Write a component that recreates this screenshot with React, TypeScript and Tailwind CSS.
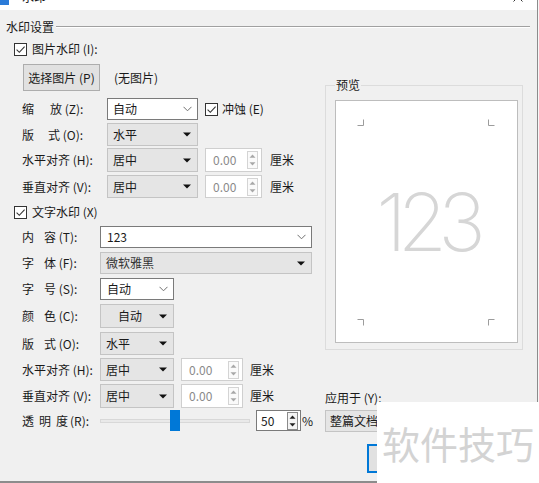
import React from 'react';

function Check() {
  return (
    <span className="flex h-[13px] w-[13px] shrink-0 items-center justify-center border border-[#333333] bg-white">
      <svg width="11" height="11" viewBox="0 0 11 11">
        <path d="M1.6 5.6 L4.3 8.3 L9.6 2.6" fill="none" stroke="#333333" strokeWidth="1.1" />
      </svg>
    </span>
  );
}

function Chevron() {
  return (
    <svg width="9" height="6" viewBox="0 0 9 6" className="shrink-0">
      <path d="M0.5 0.8 L4.5 4.8 L8.5 0.8" fill="none" stroke="#707070" strokeWidth="1" />
    </svg>
  );
}

function Tri() {
  return (
    <svg width="8" height="5" viewBox="0 0 8 5" className="shrink-0">
      <path d="M0 0.5 H8 L4 4.5 Z" fill="#111111" />
    </svg>
  );
}

function SpinArrows({ dark }: { dark?: boolean }) {
  const c = dark ? '#222222' : '#a8a8a8';
  return (
    <span
      className={
        dark
          ? 'flex h-[18px] w-[11px] shrink-0 flex-col items-center justify-around border border-[#8a8a8a] bg-[#f4f4f4]'
          : 'flex h-[18px] w-[11px] shrink-0 flex-col items-center justify-around border border-[#d4d4d4] bg-[#fafafa]'
      }
    >
      <svg width="7" height="4" viewBox="0 0 7 4">
        <path d="M0.5 3.8 L3.5 0.5 L6.5 3.8 Z" fill={c} />
      </svg>
      <svg width="7" height="4" viewBox="0 0 7 4">
        <path d="M0.5 0.2 L3.5 3.5 L6.5 0.2 Z" fill={c} />
      </svg>
    </span>
  );
}

function Spin({ w }: { w: string }) {
  return (
    <div className={`flex h-full items-center justify-between border border-[#cfcfcf] bg-white pl-[7px] pr-[3px] text-[#8a8a8a] ${w}`}>
      <span>0.00</span>
      <SpinArrows />
    </div>
  );
}

export default function App() {
  return (
    <div className="h-[483px] w-[539px] overflow-hidden bg-[#f7f7f7] font-['Noto_Sans_CJK_SC',sans-serif] text-[12px] leading-none text-[#1a1a1a]">
      <div className="relative h-[483px] w-[538px] border-r border-b-2 border-[#8c8c8c] bg-[#f0f0f0]">
        {/* title bar, mostly cut off */}
        <div className="h-[10px] overflow-hidden bg-white">
          <div className="-mt-[20px] flex h-[34px] items-center">
            <span className="-ml-[7px] h-[16px] w-[16px] bg-[#2b7bd8]" />
            <span className="ml-[13px] text-[12px]">水印</span>
            <svg width="10" height="10" viewBox="0 0 10 10" className="ml-auto mr-[14px]">
              <path d="M0.5 0.5 L9.5 9.5 M9.5 0.5 L0.5 9.5" stroke="#333" strokeWidth="1" />
            </svg>
          </div>
        </div>

        <div className="pt-[10px]">
          {/* group header */}
          <div className="flex h-[14px] items-center pl-[6px] pr-[7px]">
            <span>水印设置</span>
            <span className="ml-[2px] h-[2px] flex-1 border-t border-b border-t-[#a0a0a0] border-b-[#ffffff]" />
          </div>

          <div className="flex">
            {/* left column */}
            <div className="flex w-[318px] flex-col pl-[14px]">
              <div className="mt-[8px] flex h-[14px] items-center">
                <Check />
                <span className="ml-[5px]">图片水印 (I):</span>
              </div>

              <div className="mt-[8px] flex h-[27px] items-center pl-[9px]">
                <div className="flex h-full w-[77px] items-center justify-center border border-[#adadad] bg-[#e1e1e1]">
                  选择图片 (P)
                </div>
                <span className="ml-[14px]">(无图片)</span>
              </div>

              <div className="mt-[7px] flex h-[22px] items-center pl-[8px]">
                <span className="flex w-[85px]">
                  <span className="w-[28px]">缩</span>
                  <span>放 (Z):</span>
                </span>
                <div className="flex h-full w-[91px] items-center justify-between border border-[#7a7a7a] bg-white pl-[5px] pr-[5px]">
                  <span>自动</span>
                  <Chevron />
                </div>
                <span className="ml-[7px]">
                  <Check />
                </span>
                <span className="ml-[4px]">冲蚀 (E)</span>
              </div>

              <div className="mt-[3px] flex h-[23px] items-center pl-[8px]">
                <span className="flex w-[85px]">
                  <span className="w-[26px]">版</span>
                  <span>式 (O):</span>
                </span>
                <div className="flex h-full w-[91px] items-center justify-between border border-[#c4c4c4] bg-[#e5e5e5] pl-[5px] pr-[6px]">
                  <span>水平</span>
                  <Tri />
                </div>
              </div>

              <div className="mt-[2px] flex h-[24px] items-center pl-[8px]">
                <span className="w-[85px]">水平对齐 (H):</span>
                <div className="flex h-full w-[91px] items-center justify-between border border-[#c4c4c4] bg-[#e5e5e5] pl-[5px] pr-[6px]">
                  <span>居中</span>
                  <Tri />
                </div>
                <span className="ml-[7px] h-full">
                  <Spin w="w-[57px]" />
                </span>
                <span className="ml-[8px]">厘米</span>
              </div>

              <div className="mt-[3px] flex h-[23px] items-center pl-[8px]">
                <span className="w-[85px]">垂直对齐 (V):</span>
                <div className="flex h-full w-[91px] items-center justify-between border border-[#c4c4c4] bg-[#e5e5e5] pl-[5px] pr-[6px]">
                  <span>居中</span>
                  <Tri />
                </div>
                <span className="ml-[7px] h-full">
                  <Spin w="w-[57px]" />
                </span>
                <span className="ml-[8px]">厘米</span>
              </div>

              <div className="mt-[7px] flex h-[14px] items-center">
                <Check />
                <span className="ml-[5px]">文字水印 (X)</span>
              </div>

              <div className="mt-[7px] flex h-[22px] items-center pl-[8px]">
                <span className="flex w-[78px]">
                  <span className="w-[22px]">内</span>
                  <span>容 (T):</span>
                </span>
                <div className="flex h-full w-[212px] items-center justify-between border border-[#7a7a7a] bg-white pl-[6px] pr-[5px]">
                  <span>123</span>
                  <Chevron />
                </div>
              </div>

              <div className="mt-[4px] flex h-[22px] items-center pl-[8px]">
                <span className="flex w-[78px]">
                  <span className="w-[22px]">字</span>
                  <span>体 (F):</span>
                </span>
                <div className="flex h-full w-[212px] items-center justify-between border border-[#c4c4c4] bg-[#e5e5e5] pl-[5px] pr-[6px]">
                  <span className="text-[#333333]">微软雅黑</span>
                  <Tri />
                </div>
              </div>

              <div className="mt-[4px] flex h-[22px] items-center pl-[8px]">
                <span className="flex w-[78px]">
                  <span className="w-[22px]">字</span>
                  <span>号 (S):</span>
                </span>
                <div className="flex h-full w-[74px] items-center justify-between border border-[#7a7a7a] bg-white pl-[6px] pr-[5px]">
                  <span>自动</span>
                  <Chevron />
                </div>
              </div>

              <div className="mt-[4px] flex h-[24px] items-center pl-[8px]">
                <span className="flex w-[78px]">
                  <span className="w-[22px]">颜</span>
                  <span>色 (C):</span>
                </span>
                <div className="flex h-full w-[74px] items-center justify-between border border-[#c4c4c4] bg-[#e5e5e5] pl-[17px] pr-[6px]">
                  <span>自动</span>
                  <Tri />
                </div>
              </div>

              <div className="mt-[4px] flex h-[23px] items-center pl-[8px]">
                <span className="flex w-[78px]">
                  <span className="w-[22px]">版</span>
                  <span>式 (O):</span>
                </span>
                <div className="flex h-full w-[74px] items-center justify-between border border-[#c4c4c4] bg-[#e5e5e5] pl-[5px] pr-[6px]">
                  <span>水平</span>
                  <Tri />
                </div>
              </div>

              <div className="mt-[3px] flex h-[23px] items-center pl-[8px]">
                <span className="w-[78px]">水平对齐 (H):</span>
                <div className="flex h-full w-[74px] items-center justify-between border border-[#c4c4c4] bg-[#e5e5e5] pl-[5px] pr-[6px]">
                  <span>居中</span>
                  <Tri />
                </div>
                <span className="ml-[7px] h-full">
                  <Spin w="w-[62px]" />
                </span>
                <span className="ml-[7px]">厘米</span>
              </div>

              <div className="mt-[3px] flex h-[24px] items-center pl-[8px]">
                <span className="w-[78px]">垂直对齐 (V):</span>
                <div className="flex h-full w-[74px] items-center justify-between border border-[#c4c4c4] bg-[#e5e5e5] pl-[5px] pr-[6px]">
                  <span>居中</span>
                  <Tri />
                </div>
                <span className="ml-[7px] h-full">
                  <Spin w="w-[62px]" />
                </span>
                <span className="ml-[7px]">厘米</span>
              </div>

              <div className="mt-[2px] flex h-[21px] items-center pl-[8px]">
                <span className="flex w-[78px]">
                  <span className="w-[17px]">透</span>
                  <span className="w-[17px]">明</span>
                  <span className="w-[14px]">度</span>
                  <span>(R):</span>
                </span>
                <div className="relative flex h-full w-[150px] items-center">
                  <span className="h-[4px] w-full border border-[#d8d8d8] bg-[#e9e9e9]" />
                  <span className="absolute left-[70px] top-0 h-[21px] w-[10px] bg-[#0078d7]" />
                </div>
                <div className="ml-[6px] flex h-full w-[45px] items-center justify-between border border-[#7a7a7a] bg-white pl-[4px] pr-[2px]">
                  <span>50</span>
                  <SpinArrows dark />
                </div>
                <span className="ml-[1px]">%</span>
              </div>
            </div>

            {/* right column */}
            <div className="ml-[7px] flex w-[198px] flex-col">
              <div className="relative mt-[51px] h-[265px] border border-[#dcdcdc]">
                <span className="absolute -top-[7px] left-[9px] bg-[#f0f0f0] px-[1px]">预览</span>
                <div className="relative ml-[9px] mt-[14px] flex h-[243px] w-[183px] items-center justify-center border border-[#bdbdbd] bg-white">
                  <svg className="absolute inset-0" width="181" height="241" viewBox="0 0 181 241">
                    <path
                      d="M21.5 24.5 H27.5 V18.5 M152.5 18.5 V24.5 H158.5 M21.5 218.5 H27.5 V224.5 M158.5 218.5 H152.5 V224.5"
                      fill="none"
                      stroke="#9c9c9c"
                      strokeWidth="1"
                    />
                  </svg>
                  <span className="font-['Inter',sans-serif] text-[80px] font-extralight tracking-[-9px] text-[#d6d6d6]">
                    123
                  </span>
                </div>
              </div>
              <span className="mt-[42px] h-[14px]">应用于 (Y):</span>
              <div className="mt-[4px] flex h-[22px] w-[100px] items-center border border-[#c4c4c4] bg-[#e5e5e5] pl-[4px]">
                整篇文档
              </div>
              <div className="ml-[42px] mt-[12px] h-[29px] w-[80px] border-2 border-[#0078d7] bg-[#e1e1e1]" />
            </div>
          </div>
        </div>

        {/* watermark overlay from the source site */}
        <div className="absolute left-[377px] top-[402px] flex h-[81px] w-[162px] items-center bg-white pl-[5px]">
          <span className="text-[38px] leading-none text-[#d3d3d3]">软件技巧</span>
        </div>
      </div>
    </div>
  );
}
